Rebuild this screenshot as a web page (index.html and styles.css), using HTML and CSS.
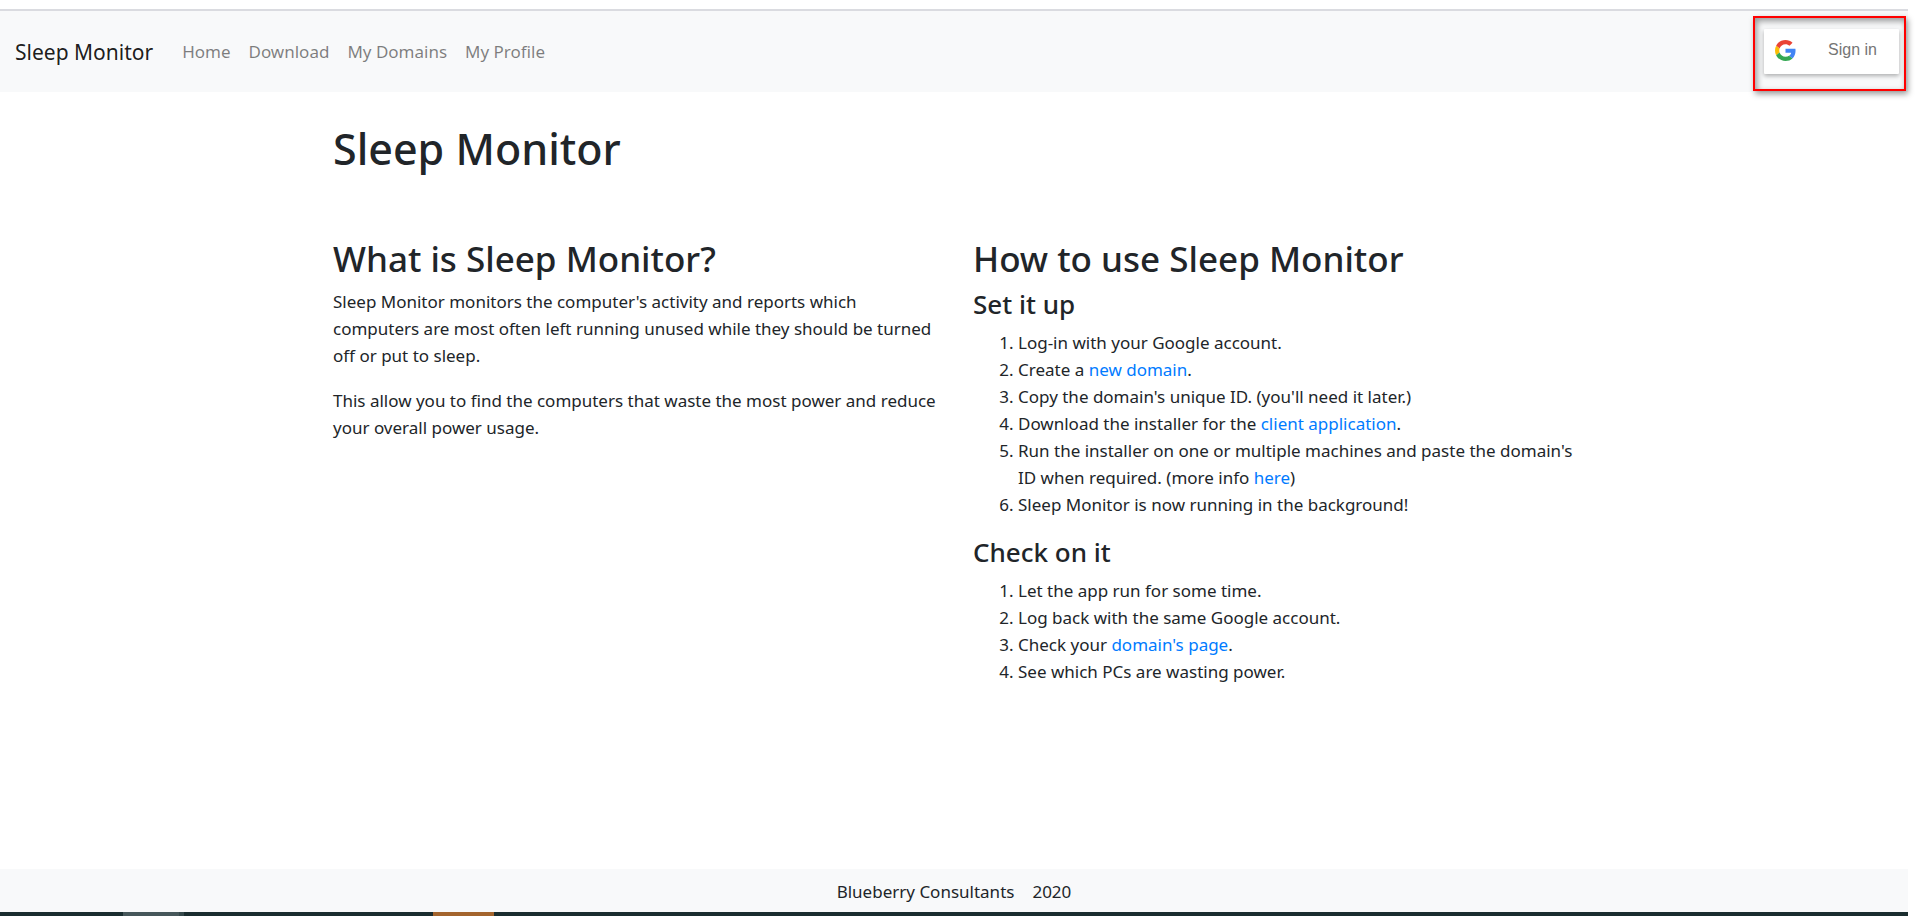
FILE: index.html
```html
<!DOCTYPE html>
<html lang="en">
<head>
<meta charset="utf-8">
<title>Sleep Monitor</title>
<meta name="viewport" content="width=device-width, initial-scale=1">
<link rel="stylesheet" href="styles.css">
</head>
<body>
<header class="navbar">
  <a class="brand" href="#">Sleep Monitor</a>
  <nav class="nav">
    <a class="nav-link" href="#">Home</a>
    <a class="nav-link" href="#">Download</a>
    <a class="nav-link" href="#">My Domains</a>
    <a class="nav-link" href="#">My Profile</a>
  </nav>
  <div class="highlight">
    <button class="signin" type="button">
      <svg class="google" viewBox="0 0 48 48" aria-hidden="true">
        <path fill="#EA4335" d="M24 9.5c3.54 0 6.71 1.22 9.21 3.6l6.85-6.85C35.9 2.38 30.47 0 24 0 14.62 0 6.51 5.38 2.56 13.22l7.98 6.19C12.43 13.72 17.74 9.5 24 9.5z"/>
        <path fill="#4285F4" d="M46.98 24.55c0-1.57-.15-3.09-.38-4.55H24v9.02h12.94c-.58 2.96-2.26 5.48-4.78 7.18l7.73 6c4.51-4.18 7.09-10.36 7.09-17.65z"/>
        <path fill="#FBBC05" d="M10.53 28.59c-.48-1.45-.76-2.99-.76-4.59s.27-3.14.76-4.59l-7.98-6.19C.92 16.46 0 20.12 0 24c0 3.88.92 7.54 2.56 10.78l7.97-6.19z"/>
        <path fill="#34A853" d="M24 48c6.48 0 11.93-2.13 15.89-5.81l-7.73-6c-2.15 1.45-4.92 2.3-8.16 2.3-6.26 0-11.57-4.22-13.47-9.91l-7.98 6.19C6.51 42.62 14.62 48 24 48z"/>
      </svg>
      <span class="signin-label">Sign in</span>
    </button>
  </div>
</header>

<main class="container">
  <h1>Sleep Monitor</h1>
  <div class="columns">
    <section>
      <h2>What is Sleep Monitor?</h2>
      <p>Sleep Monitor monitors the computer's activity and reports which computers are most often left running unused while they should be turned off or put to sleep.</p>
      <p>This allow you to find the computers that waste the most power and reduce your overall power usage.</p>
    </section>
    <section>
      <h2>How to use Sleep Monitor</h2>
      <h3>Set it up</h3>
      <ol>
        <li>Log-in with your Google account.</li>
        <li>Create a <a href="#">new domain</a>.</li>
        <li>Copy the domain's unique ID. (you'll need it later.)</li>
        <li>Download the installer for the <a href="#">client application</a>.</li>
        <li>Run the installer on one or multiple machines and paste the domain's ID when required. (more info <a href="#">here</a>)</li>
        <li>Sleep Monitor is now running in the background!</li>
      </ol>
      <h3>Check on it</h3>
      <ol>
        <li>Let the app run for some time.</li>
        <li>Log back with the same Google account.</li>
        <li>Check your <a href="#">domain's page</a>.</li>
        <li>See which PCs are wasting power.</li>
      </ol>
    </section>
  </div>
</main>

<footer class="footer">
  <span>Blueberry Consultants</span>
  <span>2020</span>
</footer>
<div class="taskbar">
  <span class="task-light"></span>
  <span class="task-edge"></span>
  <span class="task-orange"></span>
</div>
</body>
</html>
```

FILE: styles.css
```css
* {
  box-sizing: border-box;
}

body {
  display: flex;
  flex-direction: column;
  min-height: 100vh;
  margin: 0;
  padding: 9px 8px 0 0;
  background: #fff;
  color: #212529;
  font-family: "Segoe UI", "Noto Sans", sans-serif;
  font-size: 17px;
  line-height: 27px;
}

a {
  color: #007bff;
  text-decoration: none;
}

.navbar {
  display: flex;
  align-items: center;
  padding: 5px 2px 1px 15px;
  border-top: 2px solid #dadbe0;
  background: #f8f9fa;
}

.brand {
  margin-right: 29px;
  padding-bottom: 2px;
  color: rgba(0, 0, 0, 0.9);
  font-size: 21px;
}

.nav {
  display: flex;
  gap: 18px;
  padding-bottom: 4px;
}

.nav-link {
  color: rgba(0, 0, 0, 0.5);
}

.highlight {
  margin-left: auto;
  padding: 11px 5px 15px 9px;
  border: 2px solid #f00;
  box-shadow: 2px 3px 6px rgba(0, 0, 0, 0.4), inset 2px 3px 6px rgba(0, 0, 0, 0.4);
}

.signin {
  display: flex;
  align-items: center;
  width: 135px;
  height: 45px;
  padding: 0 10px 2px 11px;
  border: 0;
  border-radius: 1px;
  background: #fff;
  box-shadow: 0 2px 4px rgba(0, 0, 0, 0.3);
  color: #757575;
  font-family: "Liberation Sans", Arial, sans-serif;
  font-size: 16px;
}

.google {
  width: 21px;
  height: 21px;
}

.signin-label {
  flex: 1;
  padding-left: 20px;
  padding-bottom: 2px;
  text-align: center;
}

.container {
  flex: 1;
  width: 100%;
  max-width: 1282px;
  margin: 0 auto;
  padding: 30px 16px 0 20px;
}

h1,
h2,
h3 {
  margin: 0 0 8px;
  font-weight: 500;
}

h1 {
  margin-bottom: 61px;
  font-size: 43px;
  line-height: 54px;
}

h2 {
  font-size: 35px;
  line-height: 43px;
}

h3 {
  font-size: 26px;
  line-height: 33px;
}

.columns {
  display: grid;
  grid-template-columns: 1fr 1fr;
  gap: 34px;
}

p,
ol {
  margin: 0 0 18px;
}

ol {
  padding-left: 45px;
}

.footer {
  display: flex;
  justify-content: center;
  gap: 18px;
  padding: 9px 8px 7px;
  background: #f8f9fa;
}

.taskbar {
  display: flex;
  height: 4px;
  padding-left: 123px;
  background: #1a2d2f;
}

.task-light {
  width: 56px;
  background: #46575a;
}

.task-edge {
  width: 5px;
  background: #35484a;
}

.task-orange {
  width: 61px;
  margin-left: 249px;
  background: #a3642d;
}
```
